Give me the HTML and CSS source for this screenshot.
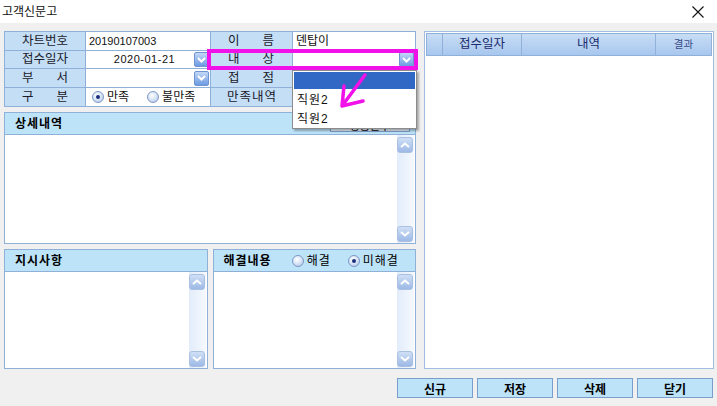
FILE: index.html
```html
<!DOCTYPE html>
<html lang="ko">
<head>
    <meta charset="UTF-8">
    <title>고객신문고</title>
    <link rel="stylesheet" href="styles.css">
</head>
<body>
    <div class="titlebar">
        <span class="title">고객신문고</span>
        <svg class="close" width="12" height="12" viewBox="0 0 12 12"><path d="M0.5 0.5 L11.5 11.5 M11.5 0.5 L0.5 11.5" stroke="#111" stroke-width="1.1"/></svg>
    </div>

    <div class="main">
        <div class="left">
            <!-- 기본 정보 -->
            <div class="info">
                <div class="lbl">차트번호</div>
                <div class="val num">20190107003</div>
                <div class="lbl spread2"><span>이</span><span>름</span></div>
                <div class="val">덴탑이</div>

                <div class="lbl">접수일자</div>
                <div class="val combo"><span class="date num">2020-01-21</span><span class="drop-btn"><svg width="9" height="6" viewBox="0 0 9 6"><polyline points="1,1 4.5,4.5 8,1" fill="none" stroke="#fff" stroke-width="2"/></svg></span></div>
                <div class="lbl spread2"><span>내</span><span>상</span></div>
                <div class="val combo"><span></span><span class="drop-btn"><svg width="9" height="6" viewBox="0 0 9 6"><polyline points="1,1 4.5,4.5 8,1" fill="none" stroke="#fff" stroke-width="2"/></svg></span></div>

                <div class="lbl spread"><span>부</span><span>서</span></div>
                <div class="val combo"><span></span><span class="drop-btn"><svg width="9" height="6" viewBox="0 0 9 6"><polyline points="1,1 4.5,4.5 8,1" fill="none" stroke="#fff" stroke-width="2"/></svg></span></div>
                <div class="lbl spread2"><span>접</span><span>점</span></div>
                <div class="val"></div>

                <div class="lbl spread"><span>구</span><span>분</span></div>
                <div class="val radios">
                    <label class="opt"><span class="radio on"></span>만족</label>
                    <label class="opt"><span class="radio"></span>불만족</label>
                </div>
                <div class="lbl left-lbl">만족내역</div>
                <div class="val"></div>
            </div>

            <div class="panel detail">
                <div class="panel-head">
                    상세내역
                    <button class="mini-btn">상용문구</button>
                </div>
                <div class="panel-body">
                    <div class="scroll">
                        <span class="sb"><svg width="10" height="6" viewBox="0 0 10 6"><polyline points="1,5 5,1.5 9,5" fill="none" stroke="#fff" stroke-width="2"/></svg></span>
                        <span class="sb"><svg width="10" height="6" viewBox="0 0 10 6"><polyline points="1,1 5,4.5 9,1" fill="none" stroke="#fff" stroke-width="2"/></svg></span>
                    </div>
                </div>
            </div>

            <div class="pair">
                <div class="panel">
                    <div class="panel-head">지시사항</div>
                    <div class="panel-body">
                        <div class="scroll">
                            <span class="sb"><svg width="10" height="6" viewBox="0 0 10 6"><polyline points="1,5 5,1.5 9,5" fill="none" stroke="#fff" stroke-width="2"/></svg></span>
                            <span class="sb"><svg width="10" height="6" viewBox="0 0 10 6"><polyline points="1,1 5,4.5 9,1" fill="none" stroke="#fff" stroke-width="2"/></svg></span>
                        </div>
                    </div>
                </div>
                <div class="panel">
                    <div class="panel-head">
                        해결내용
                        <label class="opt head-opt"><span class="radio"></span>해결</label>
                        <label class="opt head-opt"><span class="radio on"></span>미해결</label>
                    </div>
                    <div class="panel-body">
                        <div class="scroll">
                            <span class="sb"><svg width="10" height="6" viewBox="0 0 10 6"><polyline points="1,5 5,1.5 9,5" fill="none" stroke="#fff" stroke-width="2"/></svg></span>
                            <span class="sb"><svg width="10" height="6" viewBox="0 0 10 6"><polyline points="1,1 5,4.5 9,1" fill="none" stroke="#fff" stroke-width="2"/></svg></span>
                        </div>
                    </div>
                </div>
            </div>

            <!-- 펼쳐진 콤보 목록 -->
            <div class="dropdown">
                <div class="item sel"></div>
                <div class="item">직원2</div>
                <div class="item">직원2</div>
            </div>
            <div class="mark"></div>
            <svg class="pointer" width="40" height="42" viewBox="0 0 40 42">
                <path d="M31 4 L8 35 M10 15 L8 35 L29 30" fill="none" stroke="#f012e8" stroke-width="3.5" stroke-linecap="round" stroke-linejoin="round"/>
            </svg>
        </div>

        <div class="right">
            <div class="grid-head">
                <div></div>
                <div>접수일자</div>
                <div>내역</div>
                <div class="small">결과</div>
            </div>
        </div>
    </div>

    <div class="actions">
        <button class="btn">신규</button>
        <button class="btn">저장</button>
        <button class="btn">삭제</button>
        <button class="btn">닫기</button>
    </div>
</body>
</html>
```

FILE: styles.css
```css
* {
    box-sizing: border-box;
}

body {
    margin: 0;
    width: 717px;
    height: 406px;
    overflow: hidden;
    background: #f0f0f0;
    font-family: "Liberation Sans", "Noto Sans CJK KR", sans-serif;
    font-size: 12px;
    line-height: 1;
    color: #111;
}

.titlebar {
    height: 23px;
    background: #fff;
    display: flex;
    align-items: center;
    justify-content: space-between;
    padding: 0 13px 0 2px;
}

.title {
    font-size: 12px;
}

.main {
    display: flex;
    gap: 8px;
    padding: 8px 0 0 4px;
}

.left {
    position: relative;
    width: 412px;
    display: flex;
    flex-direction: column;
    gap: 5px;
}

/* info grid */
.info {
    display: grid;
    grid-template-columns: 80px 124px 81px 122px;
    grid-template-rows: 18px 17px 18px 18px;
    gap: 1px;
    padding: 1px;
    background: #8fb0d8;
}

.lbl {
    background: #c4def5;
    display: flex;
    align-items: center;
    justify-content: center;
    color: #1a1a2a;
    font-size: 12.5px;
}

.lbl.spread {
    justify-content: space-between;
    padding: 0 17px;
}

.lbl.spread2 {
    justify-content: space-between;
    padding: 0 18px 0 17px;
}

.lbl.left-lbl {
    justify-content: flex-start;
    padding-left: 16px;
    letter-spacing: 1px;
}

.val {
    background: #fff;
    display: flex;
    align-items: center;
    padding-left: 3px;
}

.num {
    font-size: 11px;
}

.val.combo {
    justify-content: space-between;
    padding-right: 1px;
}

.date {
    flex: 1;
    text-align: center;
    padding-left: 6px;
    letter-spacing: 0.5px;
}

.drop-btn {
    width: 15px;
    height: 15px;
    border-radius: 2px;
    border: 1px solid #6f94d0;
    background: linear-gradient(#c2d8f7, #6c9ae2);
    display: flex;
    align-items: center;
    justify-content: center;
}

.radios {
    gap: 18px;
    padding-left: 6px;
}

.opt {
    display: flex;
    align-items: center;
    gap: 3px;
}

.radio {
    width: 12px;
    height: 12px;
    border-radius: 50%;
    border: 1px solid #7d98c4;
    background: radial-gradient(circle at 40% 35%, #fff 0%, #dbe6f6 45%, #a9c1e8 100%);
    position: relative;
}

.radio.on::after {
    content: "";
    position: absolute;
    left: 3px;
    top: 3px;
    width: 4px;
    height: 4px;
    border-radius: 50%;
    background: #1c2f7c;
}

/* panels */
.panel {
    border: 1px solid #8fb0d8;
    background: #fff;
    display: flex;
    flex-direction: column;
}

.panel-head {
    height: 22px;
    flex: none;
    background: #bde3f8;
    border-bottom: 1px solid #8fb0d8;
    display: flex;
    align-items: center;
    padding-left: 10px;
    font-weight: bold;
    letter-spacing: 1px;
    color: #000;
}

.panel-body {
    flex: 1;
    display: flex;
    justify-content: flex-end;
}

.scroll {
    width: 17px;
    margin-right: 1px;
    padding: 2px 0 1px;
    background: linear-gradient(90deg, #e2ecfa, #f5f9fe);
    display: flex;
    flex-direction: column;
    justify-content: space-between;
}

.sb {
    width: 16px;
    height: 16px;
    border-radius: 3px;
    border: 1px solid #a9c0e3;
    background: linear-gradient(#cfdff6, #9db9e6);
    display: flex;
    align-items: center;
    justify-content: center;
}

.detail {
    height: 132px;
}

.mini-btn {
    margin-left: auto;
    margin-right: 5px;
    width: 80px;
    height: 17px;
    border: 1px solid #7f9fcc;
    background: #e4eefa;
    font-family: inherit;
    font-size: 11px;
}

.pair {
    display: flex;
    gap: 5px;
    height: 120px;
}

.pair .panel {
    flex: 1;
}

.head-opt {
    font-weight: normal;
    margin-left: 20px;
}

.head-opt + .head-opt {
    margin-left: 17px;
}

/* history list */
.right {
    width: 290px;
    height: 338px;
    border: 1px solid #a3bde0;
    background: #fff;
    padding: 1px;
}

.grid-head {
    display: grid;
    grid-template-columns: 16px 79px 134px 1fr;
    height: 23px;
    border: 1px solid #8fb0d8;
    background: linear-gradient(#c8ddf5, #a8c7ee);
}

.grid-head div {
    border-right: 1px solid #8fb0d8;
    display: flex;
    align-items: center;
    justify-content: center;
    color: #1b2b6e;
    font-size: 12.5px;
}

.grid-head div:last-child {
    border-right: none;
}

.grid-head .small {
    font-size: 10.5px;
    color: #3a4c8a;
}

/* buttons */
.actions {
    display: flex;
    justify-content: flex-end;
    gap: 4px;
    padding: 9px 4px 0 0;
}

.btn {
    width: 76px;
    height: 20px;
    border: 1px solid #7b9dcb;
    background: #bde3f8;
    font-family: inherit;
    font-size: 12px;
    font-weight: bold;
    color: #000;
    padding: 0;
}

/* open combo list and callout */
.dropdown {
    position: absolute;
    left: 288px;
    top: 39px;
    width: 125px;
    height: 59px;
    background: #fff;
    border: 1px solid #8c8c8c;
    box-shadow: 2px 2px 2px rgba(0, 0, 0, 0.3);
    padding: 1px;
    z-index: 5;
}

.item {
    height: 19px;
    display: flex;
    align-items: center;
    padding-left: 3px;
    font-size: 12px;
    letter-spacing: 1px;
}

.item.sel {
    height: 17px;
    background: #3168c6;
    margin-bottom: 1px;
}

.mark {
    position: absolute;
    left: 203px;
    top: 18px;
    width: 211px;
    height: 21px;
    border: 4px solid #f012e8;
    z-index: 6;
}

.pointer {
    position: absolute;
    left: 330px;
    top: 40px;
    z-index: 7;
}
```
